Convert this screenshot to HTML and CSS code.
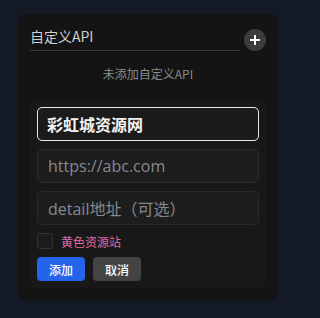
FILE: index.html
```html
<!DOCTYPE html>
<html lang="zh">
<head>
<meta charset="utf-8">
<link rel="stylesheet" href="styles.css">
</head>
<body>
<div class="card">
  <div class="header">
    <div class="title">自定义API</div>
    <button class="add-btn" type="button" aria-label="添加">
      <svg width="12" height="12" viewBox="0 0 12 12"><path d="M6 1v10M1 6h10" stroke="#fff" stroke-width="2" stroke-linecap="butt"/></svg>
    </button>
  </div>
  <div class="empty">未添加自定义API</div>
  <div class="panel">
    <div class="field focused"><span class="value">彩虹城资源网</span></div>
    <div class="field"><span class="placeholder">https://abc.com</span></div>
    <div class="field"><span class="placeholder">detail地址（可选）</span></div>
    <label class="check-row"><span class="checkbox"></span><span class="check-label">黄色资源站</span></label>
    <div class="actions">
      <button class="btn primary" type="button">添加</button>
      <button class="btn secondary" type="button">取消</button>
    </div>
  </div>
</div>
</body>
</html>
```
FILE: styles.css
```css
* { box-sizing: border-box; }
html, body { margin: 0; padding: 0; }
body {
  background: #131a26;
  width: 286px;
  height: 318px;
  padding: 14px 8px 0 18px;
  font-family: "Open Sans", "Noto Sans CJK SC", sans-serif;
}
.card {
  width: 260px;
  height: 286px;
  background: #141414;
  border-radius: 8px;
  padding: 13px 12px 12px 12px;
  display: flex;
  flex-direction: column;
}
.header {
  display: flex;
  align-items: flex-end;
  gap: 4px;
}
.title {
  flex: 1;
  font-family: "Noto Sans CJK SC", sans-serif;
  font-size: 14px;
  line-height: 18px;
  color: #cfcfcf;
  padding-bottom: 5px;
  border-bottom: 1px solid #3a3a3a;
}
.add-btn {
  width: 22px;
  height: 22px;
  border-radius: 50%;
  border: none;
  background: #3c3c3c;
  padding: 0;
  display: flex;
  align-items: center;
  justify-content: center;
}
.empty {
  margin-top: 14px;
  text-align: center;
  font-family: "Noto Sans CJK SC", sans-serif;
  font-size: 12px;
  line-height: 18px;
  color: #8a8a8a;
}
.panel {
  margin-top: 17px;
  background: #181818;
  border-radius: 6px;
  padding: 7px;
  display: flex;
  flex-direction: column;
  gap: 8px;
}
.field {
  height: 34px;
  border-radius: 5px;
  border: 1px solid #2a2a2a;
  background: #1d1d1d;
  padding: 0 10px;
  display: flex;
  align-items: center;
  font-size: 16px;
}
.field.focused {
  border: 1.5px solid #e8e8e8;
  background: #1b1b1b;
  padding-left: 9px;
}
.value {
  font-family: "Noto Sans CJK SC", sans-serif;
  font-weight: 700;
  color: #f2f2f2;
}
.placeholder {
  font-family: "Open Sans", "Noto Sans CJK SC", sans-serif;
  color: #848990;
}
.check-row {
  display: flex;
  align-items: center;
  gap: 8px;
  height: 16px;
}
.checkbox {
  width: 16px;
  height: 16px;
  border: 1px solid #333;
  border-radius: 3px;
  background: #1c1c1c;
}
.check-label {
  font-family: "Noto Sans CJK SC", sans-serif;
  font-size: 12px;
  color: #e26aa4;
}
.actions {
  display: flex;
  gap: 8px;
}
.btn {
  height: 24px;
  width: 48px;
  border: none;
  border-radius: 4px;
  font-family: "Noto Sans CJK SC", sans-serif;
  font-size: 12px;
  font-weight: 500;
  color: #fff;
  padding: 0;
}
.primary { background: #2563eb; }
.secondary { background: #444444; }
```
